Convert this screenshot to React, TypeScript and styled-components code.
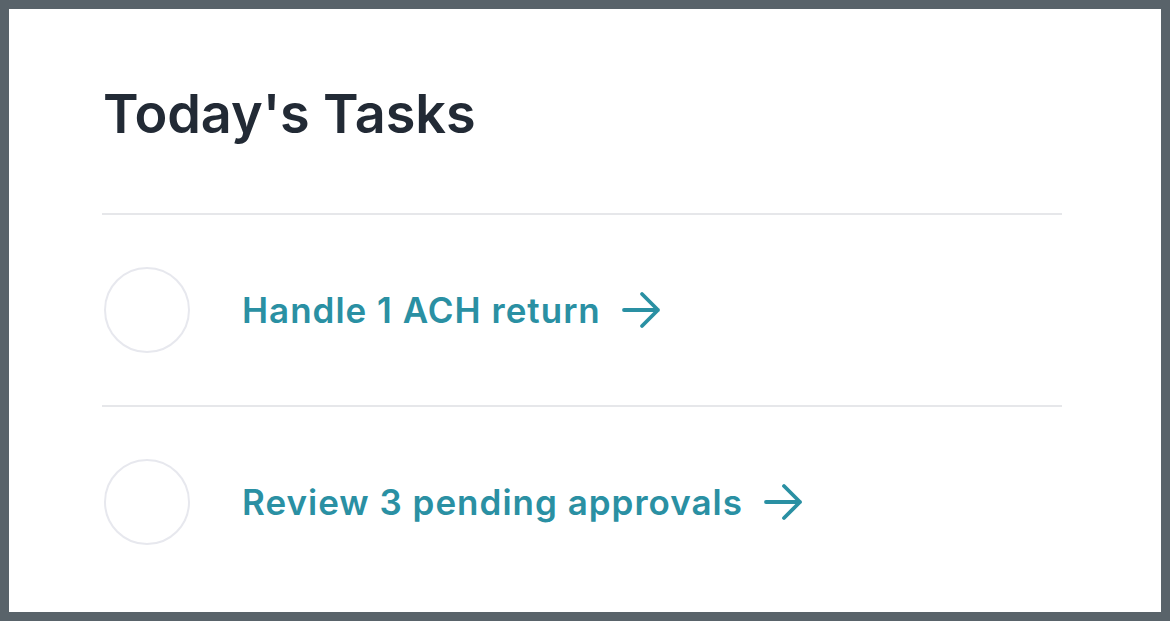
import React from 'react';
import styled, { createGlobalStyle } from 'styled-components';

const GlobalStyle = createGlobalStyle`
  html, body {
    margin: 0;
    padding: 0;
    background: #59636a;
  }
  body {
    font-family: Inter, "Noto Sans", sans-serif;
  }
`;

const tasks = [
  { id: 1, label: 'Handle 1 ACH return' },
  { id: 2, label: 'Review 3 pending approvals' },
];

function ArrowIcon() {
  return (
    <svg width="40" height="40" viewBox="0 0 40 40" fill="none">
      <path
        d="M2 20h34M20 4l16 16-16 16"
        stroke="currentColor"
        strokeWidth="3.8"
        strokeLinecap="round"
        strokeLinejoin="round"
      />
    </svg>
  );
}

export default function App() {
  return (
    <>
      <GlobalStyle />
      <Frame>
        <Card>
          <Title>Today's Tasks</Title>
          <TaskList>
            {tasks.map((task) => (
              <TaskRow key={task.id}>
                <Check />
                <TaskLink href="#">
                  {task.label}
                  <ArrowIcon />
                </TaskLink>
              </TaskRow>
            ))}
          </TaskList>
        </Card>
      </Frame>
    </>
  );
}

const Frame = styled.div`
  padding: 9px;
  height: 621px;
  box-sizing: border-box;
`;

const Card = styled.div`
  background: #fff;
  height: 603px;
  box-sizing: border-box;
  padding: 0 99px 0 93px;
  display: flex;
  flex-direction: column;
`;

const Title = styled.h1`
  margin: 0;
  padding: 72px 0 0 1px;
  height: 132px;
  box-sizing: border-box;
  font-size: 54px;
  line-height: 66px;
  font-weight: 600;
  color: #222a35;
  letter-spacing: -0.05px;
`;

const TaskList = styled.ul`
  list-style: none;
  margin: 72px 0 0 0;
  padding: 0;
`;

const TaskRow = styled.li`
  display: flex;
  align-items: center;
  gap: 52px;
  border-top: 2px solid #e6e7ea;
  padding: 52px 0 52px 2px;
`;

const Check = styled.span`
  width: 86px;
  height: 86px;
  box-sizing: border-box;
  border: 2px solid #e7e8ee;
  border-radius: 50%;
  flex-shrink: 0;
`;

const TaskLink = styled.a`
  display: flex;
  align-items: center;
  gap: 21px;
  font-size: 35px;
  font-weight: 600;
  color: #2a90a3;
  text-decoration: none;
  letter-spacing: 1px;
`;
